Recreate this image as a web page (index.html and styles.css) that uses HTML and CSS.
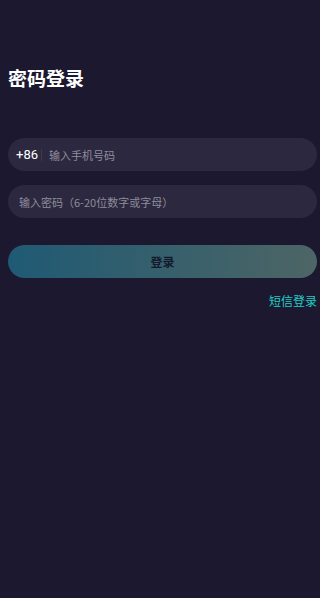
FILE: index.html
```html
<!DOCTYPE html>
<html>
<head>
    <meta charset="UTF-8">
    <title>密码登录</title>
    <link rel="stylesheet" href="styles.css">
</head>
<body>
<div class="page">
    <h1 class="title">密码登录</h1>

    <div class="field phone">
        <span class="code">+86</span>
        <span class="sep"></span>
        <input type="text" placeholder="输入手机号码"/>
    </div>
    <div class="field">
        <input type="password" placeholder="输入密码（6-20位数字或字母）"/>
    </div>

    <button class="login">登录</button>
    <div class="switch"><a href="#">短信登录</a></div>
</div>
</body>
</html>
```

FILE: styles.css
```css
html, body {
    margin: 0;
    height: 100%;
    background: #1c1830;
}

body {
    font-family: "Noto Sans CJK SC", "Noto Sans", sans-serif;
}

.page {
    padding: 0 3px 0 8px;
}

.title {
    margin: 0;
    padding-top: 63px;
    height: 30px;
    line-height: 30px;
    font-size: 19px;
    font-weight: bold;
    color: #fff;
}

.field {
    display: flex;
    align-items: center;
    height: 33px;
    margin-top: 45px;
    padding: 0 11px;
    background: #2c283f;
    border-radius: 17px;
}

.field + .field {
    margin-top: 14px;
}

.phone {
    padding-left: 8px;
}

.code {
    font-family: Roboto, "Noto Sans", sans-serif;
    font-size: 13px;
    color: #fff;
}

.sep {
    width: 1px;
    height: 12px;
    margin: 0 7px 0 3px;
    background: #3c3850;
}

.field input {
    flex: 1;
    min-width: 0;
    border: none;
    outline: none;
    background: transparent;
    font-family: "Noto Sans CJK SC", sans-serif;
    font-size: 11px;
    color: #fff;
    padding: 0;
}

.field input::placeholder {
    color: #8f8c9c;
}

.login {
    display: block;
    width: 100%;
    height: 33px;
    margin-top: 27px;
    border: none;
    border-radius: 17px;
    background: linear-gradient(to right, #1f5a74, #4d6565);
    font-family: "Noto Sans CJK SC", sans-serif;
    font-size: 12px;
    font-weight: bold;
    color: #141a2e;
}

.switch {
    text-align: right;
    margin-top: 12px;
    line-height: 18px;
}

.switch a {
    font-size: 12px;
    color: #1ccfc6;
    text-decoration: none;
}
```
